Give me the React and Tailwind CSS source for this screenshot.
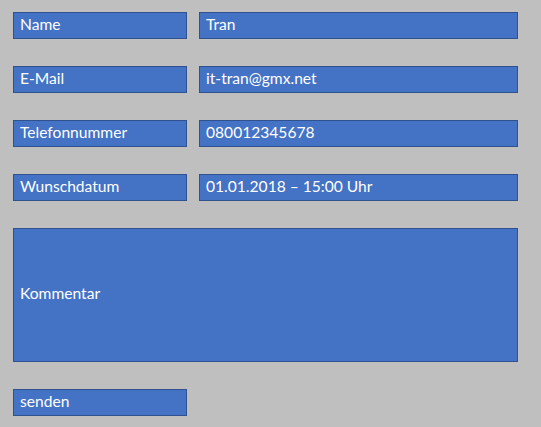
export default function App() {
  const rows = [
    { label: 'Name', value: 'Tran' },
    { label: 'E-Mail', value: 'it-tran@gmx.net' },
    { label: 'Telefonnummer', value: '080012345678' },
    { label: 'Wunschdatum', value: '01.01.2018 – 15:00 Uhr' },
  ];

  const box = 'h-[27px] flex items-center px-[6px] pb-[2px] bg-[#4472c4] border border-[#2f528f] text-white';

  return (
    <div className="w-[541px] h-[427px] bg-[#bfbfbf] pt-[12px] pl-[13px] font-['Lato',sans-serif] text-[15.6px] leading-none overflow-hidden">
      <div className="flex flex-col gap-[27px]">
        {rows.map((row) => (
          <div key={row.label} className="flex gap-[12px]">
            <div className={`${box} w-[174px]`}>{row.label}</div>
            <div className={`${box} w-[319px]`}>{row.value}</div>
          </div>
        ))}
      </div>
      <div className="mt-[27px] w-[505px] h-[134px] flex items-center px-[6px] pb-[2px] bg-[#4472c4] border border-[#2f528f] text-white">
        Kommentar
      </div>
      <div className={`${box} w-[174px] mt-[27px]`}>senden</div>
    </div>
  );
}
